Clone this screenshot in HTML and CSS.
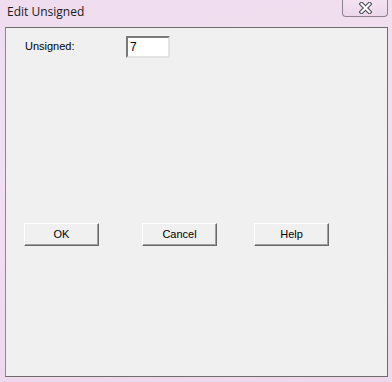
FILE: index.html
```html
<!DOCTYPE html>
<html>
<head>
<meta charset="utf-8">
<link rel="stylesheet" href="styles.css">
</head>
<body>
<div class="window">
  <div class="titlebar">
    <span class="title">Edit Unsigned</span>
    <div class="close">
      <svg width="13" height="12" viewBox="0 0 13 12">
        <path d="M2.5 2 L10.5 10 M10.5 2 L2.5 10" stroke="#464653" stroke-width="4.2" stroke-linecap="square" fill="none"/>
        <path d="M2.5 2 L10.5 10 M10.5 2 L2.5 10" stroke="#ffffff" stroke-width="2.2" stroke-linecap="square" fill="none"/>
      </svg>
    </div>
  </div>
  <div class="client">
    <div class="field-row">
      <label class="label">Unsigned:</label>
      <div class="input">7</div>
    </div>
    <div class="button-row">
      <div class="btn btn-ok">OK</div>
      <div class="btn btn-cancel">Cancel</div>
      <div class="btn btn-help">Help</div>
    </div>
  </div>
</div>
</body>
</html>
```
FILE: styles.css
```css
html, body {
  margin: 0;
  padding: 0;
}
body {
  width: 392px;
  height: 382px;
  overflow: hidden;
}
.window {
  width: 392px;
  height: 382px;
  box-sizing: border-box;
  background: linear-gradient(170deg, #efdcee 0%, #f2dff0 40%, #eed8ec 100%);
  padding: 0 4px 5px 5px;
  display: flex;
  flex-direction: column;
}
.titlebar {
  height: 27px;
  display: flex;
  justify-content: space-between;
  align-items: flex-start;
}
.title {
  font-family: "Open Sans", "Noto Sans", sans-serif;
  font-size: 12px;
  color: #1a1a1a;
  margin: 4px 0 0 2px;
  line-height: 16px;
}
.close {
  width: 46px;
  height: 17px;
  box-sizing: border-box;
  border: 1px solid #8e8290;
  border-top: none;
  border-radius: 0 0 4px 4px;
  background: linear-gradient(#f3e3f1, #ecd6ea);
  display: flex;
  align-items: center;
  justify-content: center;
}
.close svg {
  display: block;
  margin-top: -1px;
}
.client {
  flex: 1;
  box-sizing: border-box;
  background: #f0f0f0;
  border: 1px solid #6d6d6d;
  border-left-color: #8a8a8a;
  padding: 8px 0 0 18px;
  font-family: "Liberation Sans", Arial, sans-serif;
  font-size: 11px;
  color: #000;
}
.field-row {
  display: flex;
  align-items: flex-start;
}
.label {
  width: 101px;
  margin-left: 1px;
  padding-top: 4px;
  line-height: 13px;
}
.input {
  width: 44px;
  height: 22px;
  box-sizing: border-box;
  background: #fff;
  border-top: 2px solid #7a7a7a;
  border-left: 2px solid #7a7a7a;
  border-right: 2px solid #e3e3e3;
  border-bottom: 2px solid #e3e3e3;
  padding: 2px 0 0 2px;
  line-height: 14px;
  font-size: 12px;
}
.button-row {
  display: flex;
  margin-top: 165px;
}
.btn {
  width: 75px;
  height: 23px;
  box-sizing: border-box;
  background: #f0f0f0;
  border-top: 1px solid #ffffff;
  border-left: 1px solid #ffffff;
  border-right: 1px solid #696969;
  border-bottom: 1px solid #696969;
  box-shadow: inset -1px -1px 0 #a0a0a0;
  display: flex;
  align-items: center;
  justify-content: center;
  font-size: 11px;
  padding-bottom: 1px;
}
.btn-cancel {
  margin-left: 43px;
}
.btn-help {
  margin-left: 37px;
}
```
